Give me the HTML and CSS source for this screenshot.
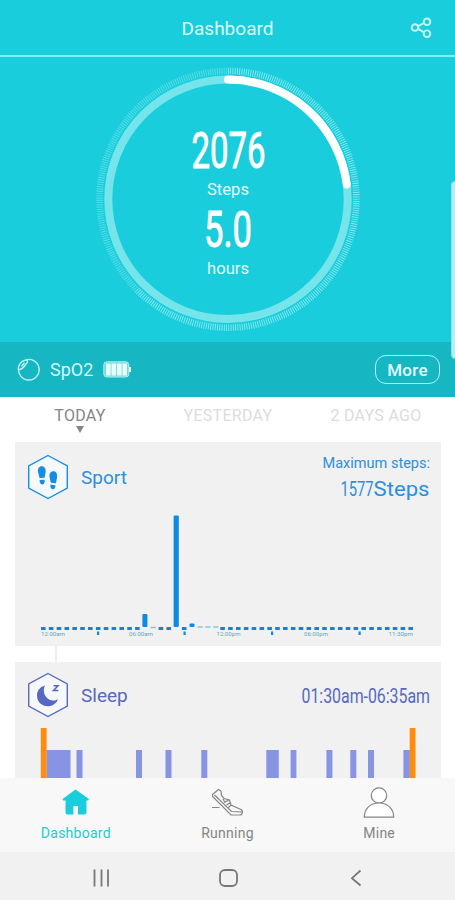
FILE: index.html
```html
<!DOCTYPE html>
<html lang="en">
<head>
    <meta charset="UTF-8">
    <meta name="viewport" content="width=device-width, initial-scale=1.0">
    <title>Dashboard</title>
    <link rel="stylesheet" href="styles.css">
</head>
<body>
    <div class="app">
        <header class="header">
            <h1>Dashboard</h1>
            <svg class="share" width="24" height="24" viewBox="0 0 24 24">
                <path d="M8 9.2L14.2 6M8 11.9L14.2 15.3"/>
                <circle cx="5" cy="10.5" r="3.3"/>
                <circle cx="17" cy="4.8" r="3.3"/>
                <circle cx="17" cy="16.7" r="3.3"/>
            </svg>
        </header>

        <section class="dial">
            <svg width="455" height="285" viewBox="0 57 455 285">
                <path class="ticks" pathLength="625" stroke-dasharray="1.1 1.7" d="M228 70.9A128.4 128.4 0 1 1 137.2 290.1"/>
                <path class="ticks dim" pathLength="375" stroke-dasharray="1.1 1.7" d="M137.2 290.1A128.4 128.4 0 0 1 228 70.9"/>
                <circle class="track" cx="228" cy="199.3" r="119.7"/>
                <path class="progress" d="M228 79.6A119.7 119.7 0 0 1 346.8 184.5"/>
                <text class="big" x="191.5" y="167.5" textLength="74" lengthAdjust="spacingAndGlyphs">2076</text>
                <text class="unit" x="207" y="195" textLength="42" lengthAdjust="spacingAndGlyphs">Steps</text>
                <text class="big" x="204" y="246.5" textLength="48" lengthAdjust="spacingAndGlyphs">5.0</text>
                <text class="unit" x="207" y="274.3" textLength="42" lengthAdjust="spacingAndGlyphs">hours</text>
            </svg>
        </section>

        <section class="device">
            <svg class="band" width="24" height="24" viewBox="0 0 24 24">
                <path d="M8 2.2A10.3 10.3 0 1 1 1.8 9.5M1.3 11.5C1 7.5 4 3.2 8 2.3 10 1.8 11.2 3 10 4.8L6.5 9.3C5 11 3.2 12 1.3 11.5Z"/>
                <path d="M4.5 8.5L7.5 4.8"/>
            </svg>
            <span class="device-name">SpO2</span>
            <svg width="29" height="17" viewBox="0 0 29 17">
                <rect class="battery-case" x=".8" y=".8" width="25" height="15.2" rx="3"/>
                <path class="battery-fill" d="M3 2.5h4.6v12H3zM8.5 2.5h4.6v12H8.5zM14 2.5h4.6v12H14zM19.5 2.5h4.4v12h-4.4zM26 6h2v5h-2z"/>
            </svg>
            <button class="more">More</button>
        </section>

        <nav class="days">
            <span class="day active">TODAY</span>
            <span class="day">YESTERDAY</span>
            <span class="day">2 DAYS AGO</span>
        </nav>

        <main class="cards">
            <section class="card sport">
                <div class="card-head">
                    <svg class="hex" width="42" height="46" viewBox="0 0 42 46">
                        <path class="hex-line" d="M21 1.5L40.3 12V34L21 44.5L1.7 34V12Z"/>
                        <path class="shape" d="M11 18c-.5-3 1-5.7 3.7-5.7s4.3 2.7 3.9 5.7l-1 5.8-5 .2zM12.7 26l4.9-.3c.5 2.5-.3 4.6-2.2 4.7s-3.2-1.9-2.7-4.4zM22.5 23c-.4-3 1.2-5.7 3.9-5.7s4.2 2.7 3.7 5.7L29 29.2l-5.2-.4zM23.5 30.6l4.9.6c.3 2.4-.9 4.2-2.7 4-1.8-.1-2.8-2.2-2.2-4.6z"/>
                    </svg>
                    <h2>Sport</h2>
                    <svg class="reading" width="110" height="50" viewBox="321 452 110 50">
                        <text class="small" x="322.5" y="468" textLength="107.5" lengthAdjust="spacingAndGlyphs">Maximum steps:</text>
                        <text class="value" x="340.5" y="495.5"><tspan textLength="33" lengthAdjust="spacingAndGlyphs">1577</tspan><tspan textLength="56" lengthAdjust="spacingAndGlyphs">Steps</tspan></text>
                    </svg>
                </div>
                <svg class="chart" width="426" height="140" viewBox="15 506 426 140">
                    <!-- one slot per half hour -->
                    <path class="slots" stroke-dasharray="4.6 3.24" d="M41 628.5H140M158.6 628.5H171.5M181.9 628.5H188M220.3 628.5H414"/>
                    <path class="slots low" stroke-dasharray="5 2.84" d="M150.7 627.5H156M197.6 627H219"/>
                    <rect x="142.4" y="614" width="5" height="13" rx="1"/>
                    <rect x="173.6" y="515.5" width="5.2" height="111.5" rx="1"/>
                    <rect x="189.5" y="623.6" width="5" height="3.4" rx="1"/>
                    <path d="M97 631.5h2.2v3.5H97zM183.5 631.5h2.2v3.5h-2.2zM271 631.5h2.2v3.5H271zM358.5 631.5h2.2v3.5h-2.2z"/>
                    <g class="hours">
                        <text x="41" y="635.5" textLength="24" lengthAdjust="spacingAndGlyphs">12:00am</text>
                        <text x="129" y="635.5" textLength="24" lengthAdjust="spacingAndGlyphs">06:00am</text>
                        <text x="216.5" y="635.5" textLength="24" lengthAdjust="spacingAndGlyphs">12:00pm</text>
                        <text x="304" y="635.5" textLength="24" lengthAdjust="spacingAndGlyphs">06:00pm</text>
                        <text x="388.5" y="635.5" textLength="24.5" lengthAdjust="spacingAndGlyphs">11:30pm</text>
                    </g>
                </svg>
            </section>

            <section class="card sleep">
                <div class="card-head">
                    <svg class="hex" width="42" height="46" viewBox="0 0 42 46">
                        <path class="hex-line" d="M21 1.5L40.3 12V34L21 44.5L1.7 34V12Z"/>
                        <path class="shape" d="M18 13.5C12.5 15 9.8 19.3 10 24c.3 6 5 10.3 10.7 10.3 4.7 0 8.8-2.7 10.3-7-2.5 1.5-6 1.9-8.9.2-5-2.7-6.6-9.2-4.1-14z"/>
                        <path class="z" d="M26.5 13.8h4.5l-4.5 4.7h4.8"/>
                    </svg>
                    <h2>Sleep</h2>
                    <svg class="reading" width="134" height="34" viewBox="298 680 134 34">
                        <text class="value" x="301.5" y="703" textLength="128.500" lengthAdjust="spacingAndGlyphs">01:30am-06:35am</text>
                    </svg>
                </div>
                <svg class="chart" width="426" height="50" viewBox="15 728 426 50">
                    <path class="awake" d="M46.5 750H70.5V778H46.5zM76.5 750h6v28h-6zM136 750h6v28h-6zM165.5 750h6v28h-6zM201.3 750h6v28h-6zM266.3 750h12.5v28h-12.5zM290.6 750h5.8v28h-5.8zM326.4 750h6v28h-6zM350.3 750h6v28h-6zM368 750h6v28h-6zM403.4 750h6.5v28h-6.5z"/>
                    <path class="limit" d="M40.8 728h5.8v50h-5.8zM409.7 728h5.8v50h-5.8z"/>
                </svg>
            </section>
        </main>

        <nav class="tabbar">
            <div class="tab active">
                <svg width="32" height="32" viewBox="0 0 32 32">
                    <path class="solid" d="M15.5 2.5L29 12l-1 1.7-1.5-.5V25q0 2.5-2.5 2.5h-6V19h-4.6v8.5H8Q5.5 27.5 5.5 25V13.200l-2 .5L2.5 12z"/>
                </svg>
                <span>Dashboard</span>
            </div>
            <div class="tab">
                <svg width="32" height="32" viewBox="0 0 32 32">
                    <path d="M1.500 7.500L7.500 2.500 10 4 10.500 8.500 13 11.500 18.500 13 20 18 30 22.500Q33 24.500 30 28H20L1.500 9.500zM3.500 8L20.500 24.500 31 25M12 12L14 15.500M17.500 13L13.500 15.500M19.500 15.500L15.500 18M20 18L17.500 20.500M1 20.500h7.500"/>
                </svg>
                <span>Running</span>
            </div>
            <div class="tab">
                <svg width="32" height="32" viewBox="0 0 32 32">
                    <circle class="paper" cx="16" cy="8.5" r="7.7"/>
                    <path class="paper" d="M1.3 30.2C1.3 21.5 7.5 16 16 16s14.7 5.5 14.7 14.2z"/>
                </svg>
                <span>Mine</span>
            </div>
        </nav>

        <footer class="system">
            <svg width="24" height="24" viewBox="0 0 24 24"><path d="M4.5 3.5v17M11.500 3.500v17M18 3.500v17"/></svg>
            <svg width="24" height="24" viewBox="0 0 24 24"><rect x="3" y="4" width="17" height="16" rx="5"/></svg>
            <svg width="24" height="24" viewBox="0 0 24 24"><path d="M16.5 4.500L8 12.200l8.500 7.300"/></svg>
        </footer>

        <div class="edge-handle"></div>
    </div>
</body>
</html>
```
FILE: styles.css
```css
body {
    margin: 0;
    font-family: Roboto, "Liberation Sans", sans-serif;
    background-color: #fff;
}

svg {
    display: block;
    flex: none;
}

.app {
    position: relative;
    width: 455px;
    height: 900px;
    overflow: hidden;
    display: flex;
    flex-direction: column;
}

.header {
    height: 55px;
    flex: none;
    display: grid;
    grid-template-columns: 60px 1fr 60px;
    align-items: center;
    background-color: #1acddc;
    border-bottom: 2px solid #7df3f9;
}

.header h1 {
    grid-column: 2;
    margin: 1px 0 0;
    text-align: center;
    font-size: 19px;
    font-weight: 400;
    color: #d9fbfc;
}

.share {
    margin: 3px 0 0 15px;
    fill: none;
    stroke: #c5f8fa;
    stroke-width: 1.9;
}

.dial {
    height: 285px;
    flex: none;
    background-color: #1acddc;
}

.ticks {
    fill: none;
    stroke: #8beaf0;
    stroke-width: 6.5;
}

.ticks.dim {
    stroke: #5edee8;
}

.track {
    fill: none;
    stroke: #75e4eb;
    stroke-width: 8;
}

.progress {
    fill: none;
    stroke: #fff;
    stroke-width: 8;
    stroke-linecap: round;
}

.big {
    font-size: 50px;
    fill: #fff;
    stroke: #fff;
    stroke-width: .9;
}

.unit {
    font-size: 17px;
    fill: #e0fbfc;
}

.device {
    height: 55px;
    flex: none;
    box-sizing: border-box;
    display: flex;
    align-items: center;
    padding: 0 15px 0 17px;
    background-color: #17b6c3;
}

.band {
    fill: none;
    stroke: #c0f4f6;
    stroke-width: 1.4;
}

.device-name {
    margin: 0 10px 0 9px;
    font-size: 18px;
    color: #d5fafa;
}

.battery-case {
    fill: #72d9df;
    stroke: #b5eff2;
}

.battery-fill {
    fill: #e9ffff;
}

.more {
    margin-left: auto;
    width: 65px;
    height: 29px;
    padding: 0;
    border: 1.5px solid #b2f1f4;
    border-radius: 11px;
    background: none;
    font: 500 17px Roboto, sans-serif;
    letter-spacing: .3px;
    color: #e0ffff;
}

.days {
    height: 45px;
    flex: none;
    display: grid;
    grid-template-columns: repeat(3, 148px);
    padding-left: 6px;
    box-sizing: border-box;
    text-align: center;
    font-size: 16px;
    letter-spacing: .3px;
    color: #dcdcdc;
}

.day {
    padding-top: 9px;
}

.day.active {
    color: #858585;
}

.day.active::after {
    content: "";
    display: block;
    width: 0;
    margin: 1px auto 0;
    border: 4px solid transparent;
    border-top: 7px solid #858585;
    border-bottom: 0;
}

.cards {
    height: 336px;
    flex: none;
    overflow: hidden;
    padding: 0 14px 0 15px;
}

.card {
    background-color: #f1f1f1;
}

.card-head {
    display: flex;
    align-items: flex-start;
    padding: 0 10px 0 12px;
}

.card h2 {
    margin: 0 auto 0 12px;
    font-size: 19px;
    line-height: 24px;
    font-weight: 400;
}

.hex-line {
    fill: #f6f9fc;
    stroke: currentColor;
    stroke-width: 1.4;
}

.hex .shape {
    fill: currentColor;
}

.hex .z {
    fill: none;
    stroke: currentColor;
    stroke-width: 1.5;
}

.reading,
.hours {
    fill: currentColor;
}

.value {
    font-size: 21px;
}

.small {
    font-size: 14px;
}

.sport {
    height: 204px;
    color: #2c8fdc;
}

.sport .card-head {
    height: 52px;
    padding-top: 12px;
}

.sport .hex {
    color: #168de4;
}

.sport h2 {
    margin-top: 12px;
}

.sport .reading {
    margin-top: -2px;
}

.sport .chart {
    fill: #0c8ae6;
}

.slots {
    fill: none;
    stroke: #1683d2;
    stroke-width: 3;
}

.slots.low {
    stroke: #8bbfe3;
    stroke-width: 1.5;
}

.hours {
    font-size: 6px;
    fill: #6ba5b7;
}

/* thin line joining the cards */
.sleep::before {
    content: "";
    display: block;
    height: 16px;
    background: linear-gradient(#eee, #eee) 40px 0 / 2px 16px no-repeat #fff;
}

.sleep {
    color: #5668c0;
}

.sleep .card-head {
    height: 56px;
    padding: 10px 9px 0 12px;
}

.sleep h2 {
    margin-top: 12px;
}

.sleep .reading {
    margin-top: 8px;
}

.awake {
    fill: #8793e3;
}

.limit {
    fill: #ff8b0f;
}

.tabbar {
    height: 74px;
    flex: none;
    display: grid;
    grid-template-columns: repeat(3, 1fr);
    background-color: #f8f8f8;
}

.tab {
    display: flex;
    flex-direction: column;
    align-items: center;
    gap: 6px;
    padding-top: 9px;
    font-size: 14px;
    letter-spacing: .25px;
    color: #858585;
}

.tab svg {
    fill: none;
    stroke: #858585;
    stroke-width: 1.2;
}

.tab.active {
    color: #25cbd4;
}

.tab .solid {
    fill: #1acddc;
    stroke: none;
}

.tab .paper {
    fill: #fff;
}

.system {
    height: 48px;
    flex: none;
    display: flex;
    justify-content: space-between;
    align-items: center;
    box-sizing: border-box;
    padding: 4px 87px 0 90px;
    background-color: #f1f1f1;
}

.system svg {
    fill: none;
    stroke: #777;
    stroke-width: 1.8;
}

.edge-handle {
    position: absolute;
    top: 181px;
    right: -4px;
    width: 6px;
    height: 176px;
    border-radius: 4px;
    border: 1px solid #8be3e9;
    background-color: #b9eef1;
}
```
